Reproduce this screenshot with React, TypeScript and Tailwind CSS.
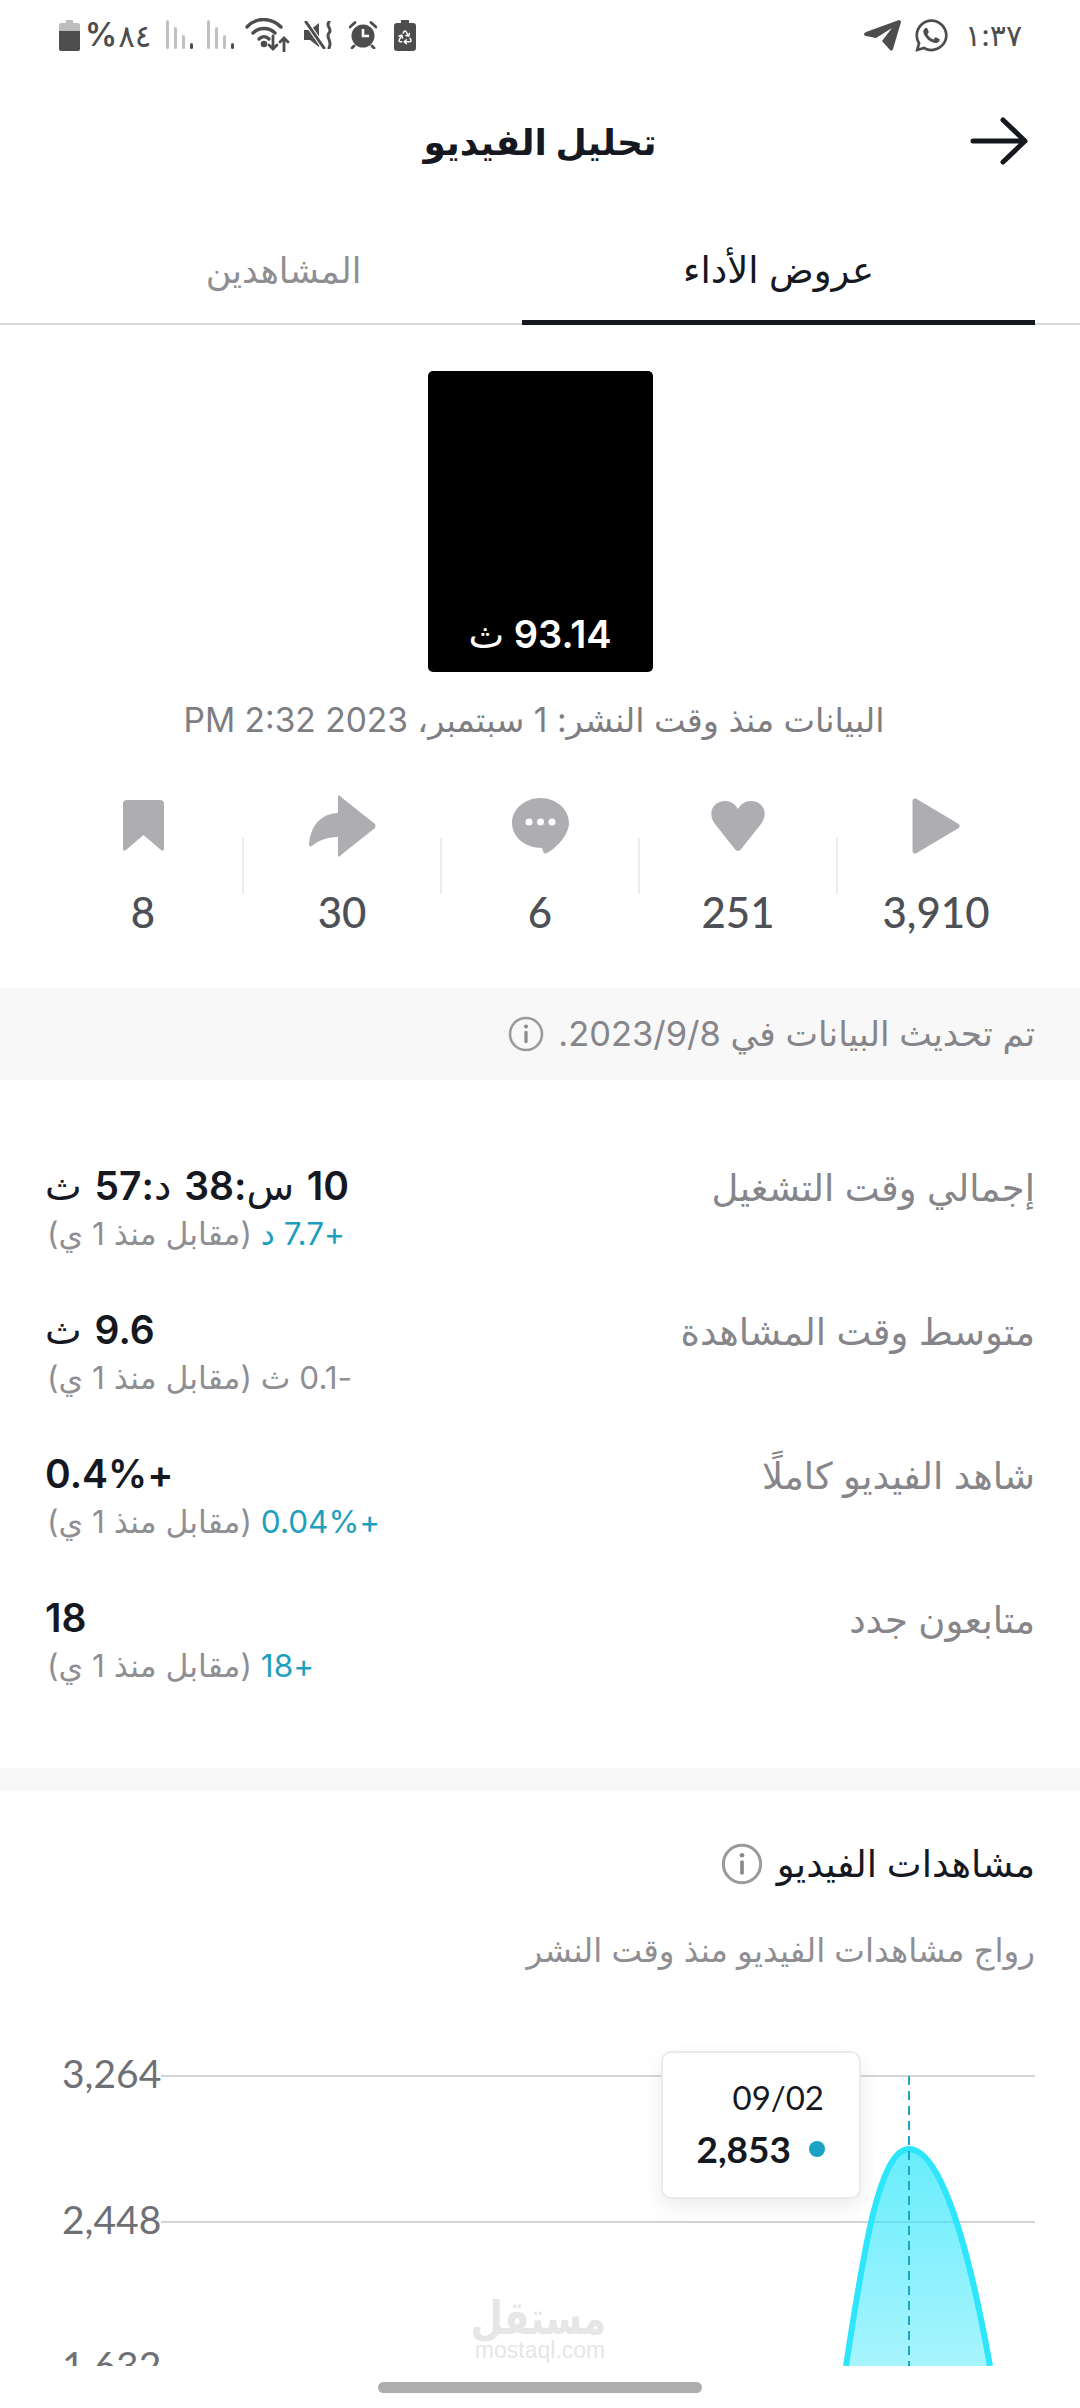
import { FaWhatsapp } from 'react-icons/fa'
import { Recycle } from 'lucide-react'

const stats = [
  { value: '3,910', icon: 'play' },
  { value: '251', icon: 'heart' },
  { value: '6', icon: 'comment' },
  { value: '30', icon: 'share' },
  { value: '8', icon: 'bookmark' },
]

const metrics = [
  { label: 'إجمالي وقت التشغيل', value: '10 س:38 د:57 ث', delta: '+7.7 د', up: true },
  { label: 'متوسط وقت المشاهدة', value: '9.6 ث', delta: '-0.1 ث', up: false },
  { label: 'شاهد الفيديو كاملًا', value: '+0.4%', delta: '+0.04%', up: true },
  { label: 'متابعون جدد', value: '18', delta: '+18', up: true },
]

// units are set lighter than the digits next to them
function Value({ text }: { text: string }) {
  return (
    <>
      {text.split(/([\u0600-\u06FF]+)/).map((part, i) =>
        i % 2 === 1 ? (
          <span key={i} className="font-normal">
            {part}
          </span>
        ) : (
          part
        ),
      )}
    </>
  )
}

function StatIcon({ name }: { name: string }) {
  if (name === 'play') {
    return (
      <svg width="48" height="56" viewBox="0 0 48 56" className="fill-[#aeaeb2] stroke-[#aeaeb2]">
        <path d="M3 3 L45 28 L3 53 Z" strokeWidth="5" strokeLinejoin="round" />
      </svg>
    )
  }
  if (name === 'heart') {
    return (
      <svg width="56" height="50" viewBox="0 0 56 50" className="fill-[#aeaeb2]">
        <path d="M28 50 C26 50 25 48 24 47 L5 23 C-4 10 5 0 15 0 C21 0 25 3 28 8 C31 3 35 0 41 0 C51 0 60 10 51 23 L32 47 C31 48 30 50 28 50 Z" />
      </svg>
    )
  }
  if (name === 'comment') {
    return (
      <svg width="57" height="56" viewBox="0 0 57 56">
        <path className="fill-[#aeaeb2]" d="M28.5 0 C44 0 57 11 57 25 C57 36 46 49 35 55 C33 56 31 55 31 53 L30 50 C13 50 0 39 0 25 C0 11 13 0 28.5 0 Z" />
        <circle cx="17" cy="24" r="3.5" fill="#fff" />
        <circle cx="28.5" cy="24" r="3.5" fill="#fff" />
        <circle cx="40" cy="24" r="3.5" fill="#fff" />
      </svg>
    )
  }
  if (name === 'share') {
    return (
      <svg width="67" height="62" viewBox="0 0 67 62" className="fill-[#aeaeb2]">
        <path d="M29 2 C29 0 31 0 32 2 L66 29 Q67 31 66 33 L32 60 C31 62 29 62 29 60 V42 C18 42 8 46 3 51 C1 52 0 51 0 49 C2 30 12 19 29 18 Z" />
      </svg>
    )
  }
  return (
    <svg width="41" height="52" viewBox="0 0 41 52" className="fill-[#aeaeb2]">
      <path d="M4 0 H37 Q41 0 41 4 V49 Q41 52 38 50 L20.5 35 L3 50 Q0 52 0 49 V4 Q0 0 4 0 Z" />
    </svg>
  )
}

function InfoIcon({ size }: { size: number }) {
  return (
    <svg width={size} height={size} viewBox="0 0 36 36" className="shrink-0">
      <circle cx="18" cy="18" r="16" fill="none" stroke="#9a9a9e" strokeWidth="2.6" />
      <circle cx="18" cy="10.5" r="2" fill="#8a8a8e" />
      <rect x="16.4" y="15" width="3.2" height="12" rx="1" fill="#8a8a8e" />
    </svg>
  )
}

function SignalBars() {
  return (
    <svg width="27" height="30" viewBox="0 0 27 30">
      <rect x="0" y="0" width="3" height="29" rx="1.5" fill="#c0c0c0" />
      <rect x="8" y="7" width="3" height="22" rx="1.5" fill="#c0c0c0" />
      <rect x="16" y="15" width="3" height="14" rx="1.5" fill="#c0c0c0" />
      <rect x="24" y="23" width="3" height="6" rx="1.5" fill="#4d4d4d" />
    </svg>
  )
}

function StatusBar() {
  return (
    <div dir="ltr" className="flex h-[70px] items-center justify-between pl-[59px] pr-[58px] text-[#4d4d4d]">
      <div className="flex items-center">
        <svg width="21" height="31" viewBox="0 0 21 31" className="mr-[5px]">
          <path d="M7 0 H14 V3 H19 Q21 3 21 5 V11 H0 V5 Q0 3 2 3 H7 Z" fill="#bdbdbd" />
          <path d="M0 11 H21 V29 Q21 31 19 31 H2 Q0 31 0 29 Z" fill="#4d4d4d" />
        </svg>
        <span className="text-[32px] font-semibold leading-none">%</span>
        <span className="ml-[1px] text-[31px] leading-none tracking-[-2px]">٨٤</span>
        <div className="ml-[15px]">
          <SignalBars />
        </div>
        <div className="ml-[14px]">
          <SignalBars />
        </div>
        <svg width="45" height="34" viewBox="0 0 45 34" fill="none" stroke="#4d4d4d" strokeLinecap="round" strokeWidth="3.4" className="ml-[11px]">
          <path d="M2 9 C11 -1 26 -1 36 9" />
          <path d="M8 15 C14 9 24 9 30 15" />
          <path d="M14 21 C17 18 21 18 24 21" />
          <circle cx="19" cy="26" r="1.6" fill="#4d4d4d" />
          <path d="M28 18 V31 M24 27 L28 31 L32 27" strokeWidth="2.8" />
          <path d="M39 33 V20 M35 24 L39 20 L43 24" strokeWidth="2.8" />
        </svg>
        <svg width="30" height="28" viewBox="0 0 30 28" className="ml-[14px]">
          <path d="M0 9 H6 L15 2 V26 L6 19 H0 Z" fill="#4d4d4d" />
          <path d="M2 1 L20 27" stroke="#fff" strokeWidth="5" />
          <path d="M2 1 L20 27" stroke="#4d4d4d" strokeWidth="3" strokeLinecap="round" />
          <path d="M25 1 C21 5 29 8 25 12 C21 16 29 20 25 27" fill="none" stroke="#4d4d4d" strokeWidth="3" strokeLinecap="round" />
        </svg>
        <svg width="28" height="28" viewBox="0 0 28 28" className="ml-[15px]">
          <circle cx="14" cy="15" r="11.5" fill="#4d4d4d" />
          <path d="M14 8 V15 H20" fill="none" stroke="#fff" strokeWidth="2.6" />
          <path d="M1 6 L6 1.5 M27 6 L22 1.5 M5 25 L3 27 M23 25 L25 27" stroke="#4d4d4d" strokeWidth="2.8" strokeLinecap="round" />
        </svg>
        <div className="relative ml-[17px] flex h-[31px] w-[22px] items-center justify-center">
          <svg width="22" height="31" viewBox="0 0 22 31" className="absolute inset-0">
            <path d="M7 0 H15 V3 H19 Q22 3 22 6 V28 Q22 31 19 31 H3 Q0 31 0 28 V6 Q0 3 3 3 H7 Z" fill="#4d4d4d" />
          </svg>
          <Recycle size={16} strokeWidth={2.2} className="relative mt-[3px] text-white" />
        </div>
      </div>
      <div className="flex items-center">
        <svg width="37" height="31" viewBox="0 0 37 31">
          <path d="M0 14 C0 13 1 13 2 12 L35 0 C36 0 37 1 37 2 L29 29 C28 31 27 31 26 30 L18 21 L28 8 L12 18 L2 16 C1 16 0 15 0 14 Z" fill="#4d4d4d" />
        </svg>
        <FaWhatsapp className="ml-[12px] text-[37px]" />
        <span className="ml-[15px] text-[30px] leading-none tracking-[-1px]">١:٣٧</span>
      </div>
    </div>
  )
}

function Chart() {
  return (
    <div dir="ltr" className="relative mt-[30px] h-[363px] overflow-hidden">
      {['3,264', '2,448', '1,632'].map((tick) => (
        <div key={tick} className="relative flex h-[146px] items-center pl-[62px] pr-[45px]">
          <span className="mb-[5px] font-['Lato'] text-[39px] leading-none text-[#6f7076]">{tick}</span>
          <div className="h-[2px] flex-1 bg-[#d4d4d6]" />
        </div>
      ))}
      <svg width="1080" height="363" viewBox="0 0 1080 363" className="absolute left-0 top-0">
        <defs>
          <linearGradient id="peak" x1="0" y1="0" x2="0" y2="1">
            <stop offset="0" stopColor="#2ee6fb" stopOpacity="0.72" />
            <stop offset="1" stopColor="#2ee6fb" stopOpacity="0.42" />
          </linearGradient>
        </defs>
        <path d="M846 363 C862 260 878 146 909 146 C940 146 968 240 990 363 Z" fill="url(#peak)" />
        <path d="M846 363 C862 260 878 146 909 146 C940 146 968 240 990 363" fill="none" stroke="#2ee6fb" strokeWidth="6" />
        <path d="M909 73 V363" stroke="#1da6c4" strokeWidth="2" strokeDasharray="9 6" />
      </svg>
      <div className="absolute left-[661px] top-[48px] h-[148px] w-[200px] rounded-[10px] border-2 border-[#ebebeb] bg-white shadow-[0_8px_20px_rgba(0,0,0,0.08)]">
        <div className="mt-[24px] pr-[35px] text-right font-['Lato'] text-[33px] leading-[40px] text-[#16181f]">09/02</div>
        <div className="mt-[12px] flex items-center justify-end pr-[34px]">
          <span className="font-['Lato'] text-[37px] font-bold leading-[40px] text-[#16181f]">2,853</span>
          <span className="ml-[18px] h-[16px] w-[16px] rounded-full bg-[#1aa3c4]" />
        </div>
      </div>
    </div>
  )
}

export default function App() {
  return (
    <div dir="rtl" className="relative h-[2408px] w-[1080px] overflow-hidden bg-white font-['Inter','DejaVu_Sans',sans-serif]">
      <StatusBar />

      <div className="relative flex h-[144px] items-center justify-center">
        <h1 className="text-[36px] font-bold text-[#16181f]">تحليل الفيديو</h1>
        <svg width="58" height="48" viewBox="0 0 58 48" fill="none" stroke="#16181f" strokeWidth="5" strokeLinecap="round" strokeLinejoin="round" className="absolute right-[52px] top-[47px]">
          <path d="M3 24 H55 M33 3 L55 24 L33 45" />
        </svg>
      </div>

      <div className="flex h-[111px] border-b-2 border-[#d9d9d9] px-[45px] pt-[3px]">
        <div className="relative flex w-[513px] items-center justify-center text-[37px] text-[#16181f]">
          عروض الأداء
          <div className="absolute bottom-[-2px] left-0 right-0 h-[5px] bg-[#16181f]" />
        </div>
        <div className="flex flex-1 items-center justify-center text-[35px] text-[#8e8e93]">المشاهدين</div>
      </div>

      <div className="relative mx-auto mt-[46px] flex h-[301px] w-[225px] items-end justify-center rounded-[5px] bg-black pb-[15px] text-[38px] font-semibold leading-[46px] text-white">
        <span>
          <Value text="93.14 ث" />
        </span>
      </div>

      <p className="mt-[28px] pr-[12px] text-center text-[33.5px] leading-[40px] text-[#7d7d82]">البيانات منذ وقت النشر: 1 سبتمبر، 2023 2:32 PM</p>

      <div className="mt-[51px] flex pl-[44px] pr-[46px]">
        {stats.map((stat, i) => (
          <div key={stat.value} className="flex flex-1">
            <div className="flex flex-1 flex-col items-center">
              <div className="flex h-[70px] items-center">
                <StatIcon name={stat.icon} />
              </div>
              <div className="mt-[26px] font-['Lato'] text-[42px] font-medium leading-[50px] text-[#4f5056]">{stat.value}</div>
            </div>
            {i < stats.length - 1 && <div className="mt-[47px] h-[56px] w-[2px] bg-[#ececec]" />}
          </div>
        ))}
      </div>

      <div className="mt-[51px] flex h-[92px] items-center gap-[14px] bg-[#f8f8f8] px-[45px] text-[34.5px] text-[#85858a]">
        <span>تم تحديث البيانات في 2023/9/8.</span>
        <InfoIcon size={36} />
      </div>

      <div className="mt-[72px] flex flex-col gap-[38px] px-[45px]">
        {metrics.map((row) => (
          <div key={row.label} className="flex h-[106px] justify-between">
            <div className="pt-[12px] text-[37px] leading-[48px] text-[#85858a]">{row.label}</div>
            <div className="flex flex-col items-end pt-[8px]">
              <div className="text-[39px] font-semibold leading-[52px] text-[#16181f] [word-spacing:3px]">
                <Value text={row.value} />
              </div>
              <div className="pl-[2px] text-[31.5px] leading-[44px] text-[#8e8e93]">
                <span className={row.up ? 'text-[#1f9fbe]' : ''}>{row.delta}</span> (مقابل منذ 1 ي)
              </div>
            </div>
          </div>
        ))}
      </div>

      <div className="mt-[78px] h-[23px] bg-[#f8f8f8]" />

      <div className="mt-[50px] flex items-center gap-[14px] px-[45px]">
        <h2 className="text-[37px] font-medium leading-[46px] text-[#16181f]">مشاهدات الفيديو</h2>
        <InfoIcon size={42} />
      </div>
      <p className="mt-[42px] px-[45px] text-[32.5px] leading-[44px] text-[#8e8e93]">رواج مشاهدات الفيديو منذ وقت النشر</p>

      <Chart />

      <div className="absolute left-[474px] top-[2295px] w-[132px] text-center text-[#e6e6e6]">
        <div className="scale-y-125 whitespace-nowrap text-[37px] font-bold leading-[46px]">مستقل</div>
        <div dir="ltr" className="font-['Liberation_Sans'] text-[23px] leading-[18px]">mostaql.com</div>
      </div>

      <div className="absolute left-[378px] top-[2382px] h-[11px] w-[324px] rounded-full bg-[#adadad]" />
    </div>
  )
}
